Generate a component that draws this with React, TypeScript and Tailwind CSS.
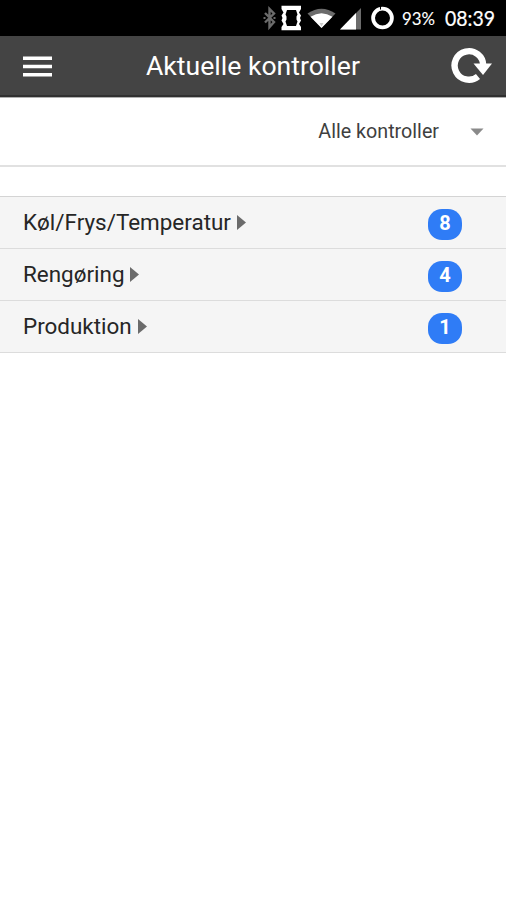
import React from 'react';

const groups = [
  { title: 'Køl/Frys/Temperatur', count: 8 },
  { title: 'Rengøring', count: 4 },
  { title: 'Produktion', count: 1 }
];

function StatusBar() {
  return (
    <div className="flex h-9 items-center bg-black pl-[263px] text-white">
      {/* Bluetooth, rotation, wifi and signal */}
      <svg width="138" height="36" viewBox="263 0 138 36" fill="none" className="shrink-0">
        <path d="M265 13l9 9-4.500 5V9l4.500 4.500-9 9" stroke="#6b6b6b" strokeWidth="2.400" />
        <path d="M263.500 18h2M273.500 18h2" stroke="#6b6b6b" strokeWidth="2" />
        <path
          d="M281.500 5.800H301V9L299 12.500 301 15.500 300 18 301 20.500 299 24 301 27V30.200H281.500V27L283.500 24 281.500 20.500 282.500 18 281.500 15.500 283.500 12.500 281.500 9ZM287 10L285.500 14.500 286.500 16.500V19.500L285.500 21.500 287 26H296L297.500 21.500 296.500 19.500V16.500L297.500 14.500 296 10Z"
          fill="#fff"
          fillRule="evenodd"
        />
        <path d="M307.500 13.500Q321.500 4 335.500 13.500L321.500 28z" fill="#6b6b6b" />
        <path d="M310.500 16.800Q321.500 9.500 332.500 16.800L321.500 28z" fill="#fff" />
        <path d="M319.500 23h4l-2 3.500z" fill="#ccc" />
        <path d="M340 29.500L361 8v21.500z" fill="#6b6b6b" />
        <path d="M340 29.500L356 13v16.500z" fill="#fff" />
        <circle cx="382.500" cy="18" r="9.400" stroke="#fff" strokeWidth="3.800" />
        <path d="M380.500 6v3.500" stroke="#000" strokeWidth="1" />
      </svg>
      <svg width="105" height="36" viewBox="401 0 105 36" fill="#fff" className="shrink-0 font-['Lato',sans-serif]">
        <text x="402" y="25" fontSize="17" textLength="33" lengthAdjust="spacingAndGlyphs" stroke="#fff" strokeWidth=".1">93%</text>
        <text x="445" y="26" fontSize="21" textLength="50" lengthAdjust="spacingAndGlyphs" stroke="#fff" strokeWidth=".2">08:39</text>
      </svg>
    </div>
  );
}

function Header() {
  return (
    <header className="flex h-[61px] items-center border-b-2 border-[#303030] bg-[#444444] pr-[14px] pl-[23px] text-white">
      <button aria-label="Menu">
        <svg width="29" height="23" viewBox="0 0 29 23" fill="#fff">
          <path d="M0 2.500h29v3.500H0zM0 10.700h29v3.500H0zM0 19h29v3.500H0z" />
        </svg>
      </button>
      <h1 className="ml-[94px] text-[26.600px] leading-8 whitespace-nowrap">Aktuelle kontroller</h1>
      <button aria-label="Opdater" className="ml-auto">
        <svg width="41" height="40" viewBox="451 46 41 40" fill="none">
          <path d="M483.200 65.500A14.300 14.300 0 1 0 478 76.500" stroke="#fff" strokeWidth="6.400" />
          <path d="M473.500 63.500H492L483 75z" fill="#fff" />
        </svg>
      </button>
    </header>
  );
}

export default function App() {
  return (
    <div className="min-h-screen w-full bg-white font-['Roboto',sans-serif]">
      <StatusBar />
      <Header />

      {/* Filter */}
      <div className="flex h-[70px] items-center justify-end border-t border-b-2 border-t-[#b0b0b0] border-b-[#e1e1e1] pr-[22px]">
        <span className="text-[19.700px] text-[#3f3f3f]">Alle kontroller</span>
        <svg width="14" height="8" viewBox="0 0 14 8" className="ml-[31px]">
          <path d="M.5.500h13L7 7.500z" fill="#8a8a8a" />
        </svg>
      </div>

      {/* Groups */}
      <ul className="mt-[29px] border-t border-[#d4d4d4]">
        {groups.map((group) => (
          <li key={group.title} className="flex h-[52px] items-center border-b border-[#dcdcdc] bg-[#f5f5f5] pr-[44px] pl-[23px]">
            <span className="pb-0.5 text-[22.450px] leading-7 text-[#262626]">{group.title}</span>
            <svg width="9" height="15" viewBox="0 0 9 15" className="mb-px ml-1.5">
              <path d="M0 0L9 7.500 0 15z" fill="#6b6b6b" />
            </svg>
            <span className="mt-[3px] ml-auto flex h-[31px] w-[34px] items-center justify-center rounded-[14px] bg-[#2f7cf6] pb-0.5 text-[20px] font-bold text-white">
              {group.count}
            </span>
          </li>
        ))}
      </ul>
    </div>
  );
}
